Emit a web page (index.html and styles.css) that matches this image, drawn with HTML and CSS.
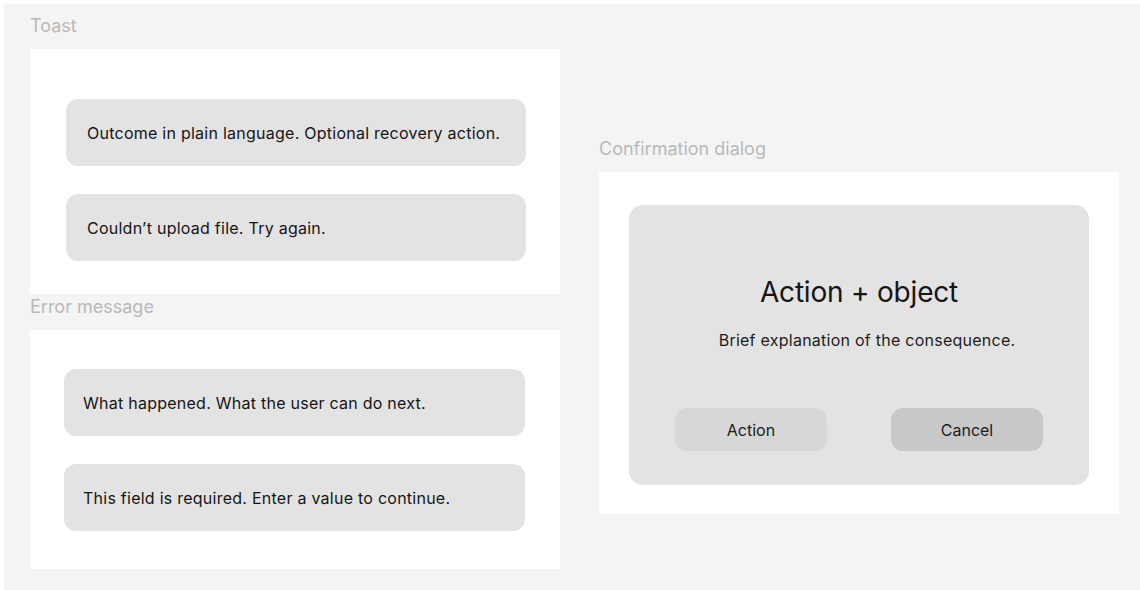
FILE: index.html
```html
<!DOCTYPE html>
<html lang="en">
<head>
  <meta charset="UTF-8" />
  <meta name="viewport" content="width=device-width, initial-scale=1.0"/>
  <title>Message patterns</title>
  <link rel="stylesheet" href="styles.css">
</head>
<body>

  <div class="board">
    <div class="col-left">
      <div class="label">Toast</div>
      <div class="panel toast-panel">
        <div class="bubble">Outcome in plain language. Optional recovery action.</div>
        <div class="bubble">Couldn’t upload file. Try again.</div>
      </div>

      <div class="label">Error message</div>
      <div class="panel error-panel">
        <div class="bubble">What happened. What the user can do next.</div>
        <div class="bubble">This field is required. Enter a value to continue.</div>
      </div>
    </div>

    <div class="col-right">
      <div class="label">Confirmation dialog</div>
      <div class="panel dialog-panel">
        <div class="dialog">
          <div class="dialog-title">Action + object</div>
          <div class="dialog-text">Brief explanation of the consequence.</div>
          <div class="dialog-actions">
            <button class="btn btn-action">Action</button>
            <button class="btn btn-cancel">Cancel</button>
          </div>
        </div>
      </div>
    </div>
  </div>

</body>
</html>
```

FILE: styles.css
```css
* { box-sizing: border-box; margin: 0; padding: 0; font-family: Inter, 'Noto Sans', sans-serif; }
body {
  background: #fff;
  padding: 4px 0 0 4px;
  overflow: hidden;
}

.board {
  background: #f4f4f4;
  min-height: calc(100vh - 4px);
  padding: 9px 0 0 26px;
  display: flex;
  align-items: flex-start;
  gap: 39px;
}

.col-left { width: 530px; }
.col-right { width: 520px; margin-top: 123px; }

.label {
  font-size: 18px;
  line-height: 24px;
  padding: 1px 0 11px;
  color: #b9b9b9;
}

.panel { background: #fff; }

.toast-panel { height: 245px; padding: 50px 0 0 36px; }
.error-panel { height: 239px; padding: 39px 0 0 34px; }

.bubble {
  width: 460px; height: 67px;
  background: #e3e3e3;
  border-radius: 12px;
  display: flex; align-items: center;
  padding-left: 21px;
  font-size: 16px;
  letter-spacing: 0.25px;
  color: #151515;
  margin-bottom: 28px;
}
.error-panel .bubble { width: 461px; padding-left: 19px; }

.dialog-panel { height: 342px; padding: 33px 30px 0 30px; }

.dialog {
  height: 280px;
  background: #e3e3e3;
  border-radius: 14px;
  padding-top: 70px;
  display: flex; flex-direction: column; align-items: center;
}

.dialog-title {
  font-size: 28px; line-height: 34px;
  letter-spacing: -0.2px;
  color: #151515;
  margin-bottom: 21px;
}

.dialog-text {
  font-size: 16px; line-height: 20px;
  letter-spacing: 0.25px;
  color: #1c1c1c;
  padding-left: 16px;
  margin-bottom: 58px;
}

.dialog-actions { display: flex; gap: 64px; }

.btn {
  width: 152px; height: 43px;
  border: none; border-radius: 12px;
  font-size: 16px; color: #1c1c1c;
  cursor: pointer;
}
.btn-action { background: #d7d7d7; }
.btn-cancel { background: #c8c8c8; }
```
